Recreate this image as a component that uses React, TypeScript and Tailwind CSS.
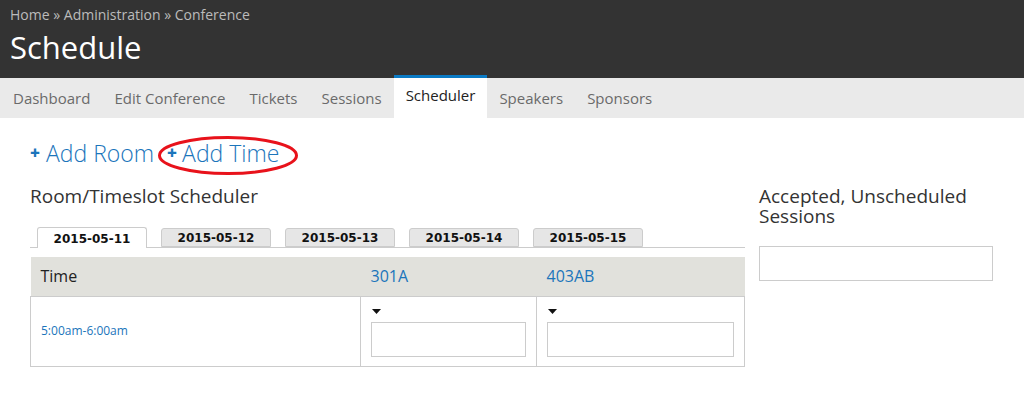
import { useState } from 'react';

// Conference admin: room/timeslot scheduler page.

const navItems = ['Dashboard', 'Edit Conference', 'Tickets', 'Sessions', 'Scheduler', 'Speakers', 'Sponsors'];
const days = ['2015-05-11', '2015-05-12', '2015-05-13', '2015-05-14', '2015-05-15'];

function Caret() {
	return (
		<svg width="9" height="5" viewBox="0 0 9 5" className="block">
			<path d="M0 0h9L4.5 5z" fill="#111" />
		</svg>
	);
}

function SlotCell() {
	return (
		<td className="border border-[#cccccc] px-[10px] pt-[12px] pb-[8px] align-top">
			<div className="pl-[1px]">
				<Caret />
			</div>
			<div className="mt-[8px] h-[35px] w-full border border-[#cccccc] bg-white" />
		</td>
	);
}

export default function App() {
	const [day, setDay] = useState(days[0]);

	return (
		<div className="min-h-screen bg-white font-['Open_Sans','Noto_Sans',sans-serif] text-[#333]">
			<header className="bg-[#333333] h-[78px] px-[10px] pt-[5px]">
				<div className="text-[14px] leading-[20px] text-[#bbbbbb]">
					Home » Administration » Conference
				</div>
				<h1 className="text-[31px] leading-[44px] text-white">Schedule</h1>
			</header>

			<nav className="bg-[#eaeaea] h-[40px] flex pl-[1px]">
				{navItems.map((item) =>
					item === 'Scheduler' ? (
						<a
							key={item}
							className="-mt-[3px] h-[43px] bg-white border-t-[3px] border-[#0a7ac4] px-[12px] pt-[6px] text-[15px] text-[#222]"
						>
							{item}
						</a>
					) : (
						<a key={item} className="px-[12px] pt-[9px] text-[15px] text-[#6a6a6a]">
							{item}
						</a>
					)
				)}
			</nav>

			<main className="flex gap-[14px] pl-[30px] pt-[15px]">
				<div className="w-[715px]">
					<div className="flex items-center h-[40px] text-[23px] font-light text-[#1b75bb]">
						<a className="flex items-center">
							<span className="text-[17px] font-extrabold mr-[6px] mt-[-1px]">+</span>Add Room
						</a>
						<a className="relative flex items-center ml-[13px]">
							<span className="text-[17px] font-extrabold mr-[5px] mt-[-1px]">+</span>Add Time
							<svg
								className="absolute left-[-9px] top-[-1px] pointer-events-none"
								width="142"
								height="41"
								viewBox="0 0 142 41"
							>
								<ellipse cx="70" cy="20.5" rx="68.5" ry="18" fill="none" stroke="#e8121b" strokeWidth="3" />
							</svg>
						</a>
					</div>

					<h2 className="mt-[10px] text-[19px] leading-[26px] text-[#333]">Room/Timeslot Scheduler</h2>

					<div className="mt-[18px] flex gap-[14px] border-b border-[#cccccc] pl-[7px] font-['DejaVu_Sans',Verdana,sans-serif]">
						{days.map((d) => (
							<button
								key={d}
								onClick={() => setDay(d)}
								className={
									d === day
										? 'w-[110px] h-[21px] -mb-px border border-b-0 border-[#cccccc] rounded-t-[3px] bg-white text-[12px] font-bold text-[#111] pt-[1px]'
										: 'w-[110px] h-[19px] mt-[1px] border border-[#cccccc] rounded-t-[3px] bg-[#e6e6e6] text-[12px] font-bold text-[#111]'
								}
							>
								{d}
							</button>
						))}
					</div>

					<table className="mt-[9px] w-full border-collapse">
						<thead>
							<tr className="bg-[#e1e1dc] h-[39px]">
								<th className="w-[330px] pl-[10px] text-left text-[16px] font-normal text-[#222]">Time</th>
								<th className="w-[176px] pl-[10px] text-left text-[16px] font-normal text-[#1b75bb]">301A</th>
								<th className="pl-[10px] text-left text-[16px] font-normal text-[#1b75bb]">403AB</th>
							</tr>
						</thead>
						<tbody>
							<tr className="h-[70px]">
								<td className="border border-[#cccccc] pl-[10px] text-[12px] text-[#1b75bb]">5:00am-6:00am</td>
								<SlotCell />
								<SlotCell />
							</tr>
						</tbody>
					</table>
				</div>

				<aside className="w-[234px] pt-[53px]">
					<h2 className="text-[19px] leading-[20px] text-[#333]">Accepted, Unscheduled Sessions</h2>
					<div className="mt-[20px] h-[35px] border border-[#cccccc]" />
				</aside>
			</main>
		</div>
	);
}
